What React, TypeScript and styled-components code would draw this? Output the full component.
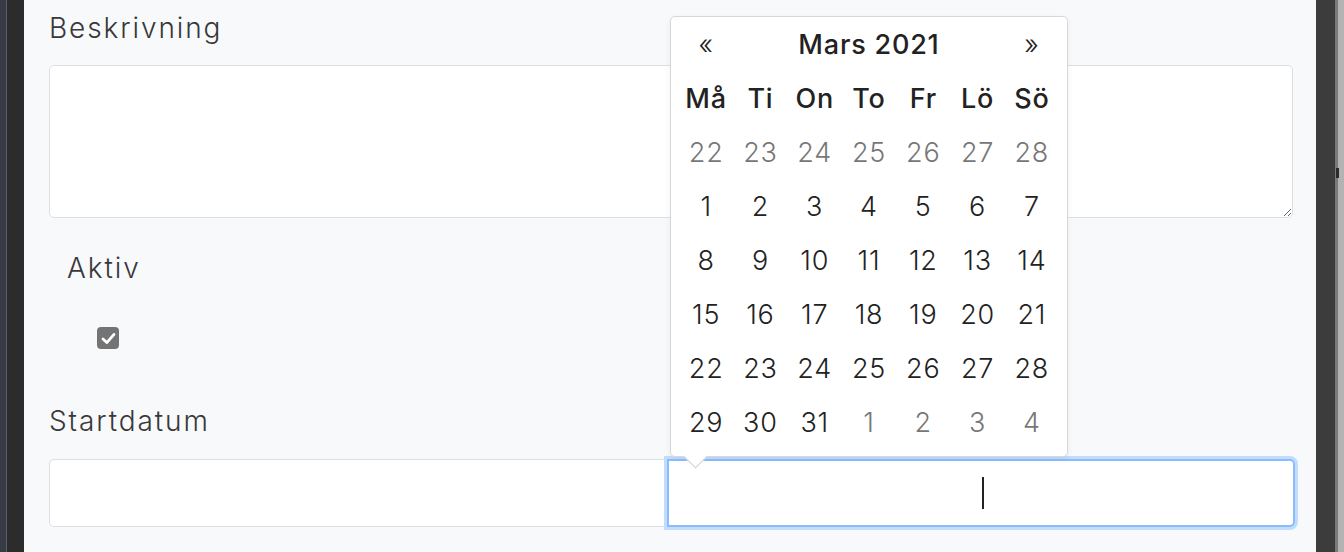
import React from 'react';
import styled, { createGlobalStyle } from 'styled-components';

const GlobalStyle = createGlobalStyle`
  html, body {
    margin: 0;
    padding: 0;
    background: #2b2c2b;
  }
  * {
    box-sizing: border-box;
  }
`;

const Frame = styled.div`
  display: flex;
  height: 552px;
  width: 1344px;
  overflow: hidden;
  font-family: Inter, 'Noto Sans', sans-serif;
  color: #3a3a3a;
`;

const LeftEdge = styled.div`
  width: 24px;
  flex: none;
  background: linear-gradient(
    to right,
    #373b45 0px,
    #373b45 6px,
    #5b5f66 6px,
    #5b5f66 7px,
    #2b2c2b 7px
  );
`;

const RightEdge = styled.div`
  width: 28px;
  flex: none;
  position: relative;
  background: linear-gradient(
    to right,
    #3c3c3c 0px,
    #3c3c3c 19px,
    #7a7a7a 19px,
    #7a7a7a 22px,
    #b3b3b3 22px
  );
`;

const ScrollMark = styled.div`
  position: absolute;
  left: 20px;
  top: 168px;
  width: 3px;
  height: 10px;
  background: #2a2a2a;
`;

const Content = styled.div`
  flex: 1;
  position: relative;
  background: #f8f9fb;
  padding: 8px 23px 0 25px;
  display: flex;
  flex-direction: column;
`;

const Label = styled.label<{ $indent?: number }>`
  display: block;
  font-size: 28px;
  line-height: 40px;
  letter-spacing: 1.9px;
  font-weight: 300;
  color: #383838;
  padding-left: ${(p) => p.$indent ?? 0}px;
`;

const TextArea = styled.textarea`
  display: block;
  width: 100%;
  height: 153px;
  margin-top: 17px;
  border: 1px solid #dcdfe4;
  border-radius: 5px;
  background: #fff;
  resize: vertical;
  font: inherit;
  outline: none;
`;

const CheckGroup = styled.div`
  margin-top: 30px;
  display: flex;
  flex-direction: column;
`;

const CheckBox = styled.span`
  margin: 39px 0 0 48px;
  width: 22px;
  height: 22px;
  border-radius: 4px;
  background: #747474;
  display: flex;
  align-items: center;
  justify-content: center;
`;

const DateGroup = styled.div`
  margin-top: 52px;
  display: flex;
  flex-direction: column;
`;

const InputRow = styled.div`
  margin-top: 18px;
  display: flex;
  height: 68px;
`;

const LeftInput = styled.div`
  width: 618px;
  flex: none;
  background: #fff;
  border: 1px solid #dcdfe4;
  border-right: none;
  border-radius: 5px 0 0 5px;
`;

const FocusedInput = styled.div`
  flex: 1;
  margin-right: -2px;
  background: #fff;
  border: 2px solid #8bbcfd;
  border-radius: 0 5px 5px 0;
  box-shadow: 0 0 0 3px #c2dcfe;
  display: flex;
  align-items: center;
  justify-content: center;
  position: relative;
  z-index: 1;
`;

const Caret = styled.span`
  width: 2px;
  height: 32px;
  background: #222;
  margin-left: 3px;
`;

const Popover = styled.div`
  position: absolute;
  left: 646px;
  top: 16px;
  width: 398px;
  background: #fff;
  border: 1px solid #d6d8db;
  border-radius: 5px;
  box-shadow: 0 2px 6px rgba(0, 0, 0, 0.06);
  padding: 0 8px 7px;
  z-index: 2;
  font-family: Inter, 'Noto Sans', sans-serif;
`;

const Arrow = styled.div`
  position: absolute;
  left: 16px;
  bottom: -9px;
  width: 17px;
  height: 17px;
  background: #fff;
  border-right: 1px solid #cfd1d4;
  border-bottom: 1px solid #cfd1d4;
  transform: rotate(45deg);
`;

const Grid = styled.div`
  display: grid;
  grid-template-columns: repeat(7, 1fr);
  grid-auto-rows: 54px;
`;

const Cell = styled.div<{ $muted?: boolean; $bold?: boolean; $span?: number }>`
  display: flex;
  align-items: center;
  justify-content: center;
  grid-column: ${(p) => (p.$span ? `span ${p.$span}` : 'auto')};
  font-size: 27px;
  letter-spacing: 0.8px;
  font-weight: ${(p) => (p.$bold ? 500 : 300)};
  color: ${(p) => (p.$muted ? '#777' : '#222')};
`;

const weekDays = ['Må', 'Ti', 'On', 'To', 'Fr', 'Lö', 'Sö'];

const days: { d: number; muted: boolean }[] = [
  ...[22, 23, 24, 25, 26, 27, 28].map((d) => ({ d, muted: true })),
  ...Array.from({ length: 31 }, (_, i) => ({ d: i + 1, muted: false })),
  ...[1, 2, 3, 4].map((d) => ({ d, muted: true })),
];

const Check = () => (
  <svg width="15" height="13" viewBox="0 0 15 13">
    <path
      d="M2 7 L5.8 10.6 L13 2.4"
      fill="none"
      stroke="#fff"
      strokeWidth="2.8"
      strokeLinecap="round"
      strokeLinejoin="round"
    />
  </svg>
);

export default function App() {
  return (
    <>
      <GlobalStyle />
      <Frame>
        <LeftEdge />
        <Content>
          <Label>Beskrivning</Label>
          <TextArea />

          <CheckGroup>
            <Label $indent={18}>Aktiv</Label>
            <CheckBox>
              <Check />
            </CheckBox>
          </CheckGroup>

          <DateGroup>
            <Label>Startdatum</Label>
            <InputRow>
              <LeftInput />
              <FocusedInput>
                <Caret />
              </FocusedInput>
            </InputRow>
          </DateGroup>

          <Popover>
            <Grid>
              <Cell>«</Cell>
              <Cell $span={5} $bold>
                Mars 2021
              </Cell>
              <Cell>»</Cell>
              {weekDays.map((w) => (
                <Cell key={w} $bold>
                  {w}
                </Cell>
              ))}
              {days.map((x, i) => (
                <Cell key={i} $muted={x.muted}>
                  {x.d}
                </Cell>
              ))}
            </Grid>
            <Arrow />
          </Popover>
        </Content>
        <RightEdge>
          <ScrollMark />
        </RightEdge>
      </Frame>
    </>
  );
}
